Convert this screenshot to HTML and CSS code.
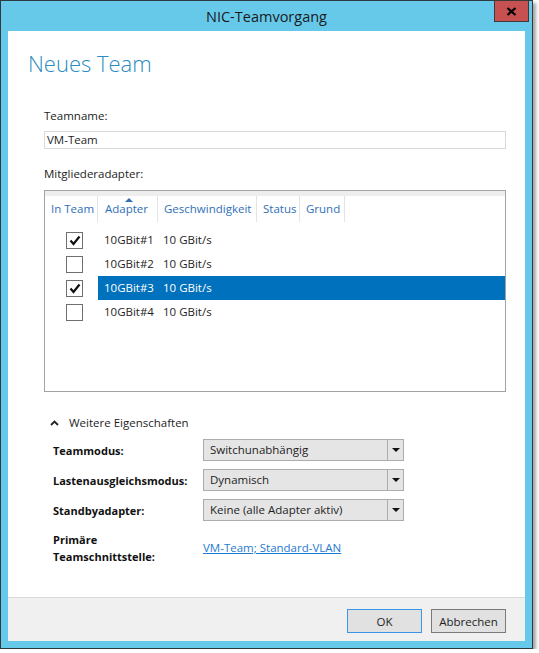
FILE: index.html
```html
<!DOCTYPE html>
<html lang="de">
<head>
<meta charset="utf-8">
<title>NIC-Teamvorgang</title>
<link rel="stylesheet" href="styles.css">
</head>
<body>
<div class="window">
  <div class="titlebar">
    <span class="title">NIC-Teamvorgang</span>
    <div class="close"><svg width="11" height="9" viewBox="0 0 11 9"><path d="M1.5 1 L9.5 8 M9.5 1 L1.5 8" stroke="#000" stroke-width="2.2" fill="none"/></svg></div>
  </div>
  <div class="content">
    <div class="main">
      <h1 class="heading">Neues Team</h1>
      <div class="label">Teamname:</div>
      <div class="textbox">VM-Team</div>
      <div class="label label-members">Mitgliederadapter:</div>
      <div class="listbox">
        <div class="list-band"></div>
        <div class="list-head">
          <div class="col c1">In Team</div>
          <div class="col c2 sorted">Adapter<span class="sort-arrow"></span></div>
          <div class="col c3">Geschwindigkeit</div>
          <div class="col c4">Status</div>
          <div class="col c5">Grund</div>
        </div>
        <div class="rows">
          <div class="row">
            <div class="cell c1"><span class="check on"><svg width="12" height="11" viewBox="0 0 12 11"><path d="M1.5 5.5 L4.5 9 L10.5 1.5" stroke="#111" stroke-width="2.2" fill="none"/></svg></span></div>
            <div class="cell c2">10GBit#1</div>
            <div class="cell c3">10 GBit/s</div>
          </div>
          <div class="row">
            <div class="cell c1"><span class="check"></span></div>
            <div class="cell c2">10GBit#2</div>
            <div class="cell c3">10 GBit/s</div>
          </div>
          <div class="row selected">
            <div class="cell c1"><span class="check on"><svg width="12" height="11" viewBox="0 0 12 11"><path d="M1.5 5.5 L4.5 9 L10.5 1.5" stroke="#111" stroke-width="2.2" fill="none"/></svg></span></div>
            <div class="sel">
              <div class="cell c2">10GBit#3</div>
              <div class="cell c3">10 GBit/s</div>
            </div>
          </div>
          <div class="row">
            <div class="cell c1"><span class="check"></span></div>
            <div class="cell c2">10GBit#4</div>
            <div class="cell c3">10 GBit/s</div>
          </div>
        </div>
      </div>
      <div class="more">
        <svg class="chev" width="9" height="6" viewBox="0 0 9 6"><path d="M1 5 L4.5 1.5 L8 5" stroke="#222" stroke-width="1.8" fill="none"/></svg>
        <span>Weitere Eigenschaften</span>
      </div>
      <div class="props">
        <div class="plabel">Teammodus:</div>
        <div class="combo"><span class="cval">Switchunabhängig</span><span class="carrow"></span></div>
        <div class="plabel">Lastenausgleichsmodus:</div>
        <div class="combo"><span class="cval">Dynamisch</span><span class="carrow"></span></div>
        <div class="plabel">Standbyadapter:</div>
        <div class="combo"><span class="cval">Keine (alle Adapter aktiv)</span><span class="carrow"></span></div>
        <div class="plabel two">Primäre<br>Teamschnittstelle:</div>
        <a class="link" href="#">VM-Team; Standard-VLAN</a>
      </div>
    </div>
    <div class="footer">
      <button class="btn default">OK</button>
      <button class="btn">Abbrechen</button>
    </div>
  </div>
</div>
</body>
</html>
```

FILE: styles.css
```css
* { box-sizing: border-box; }
html, body { margin: 0; padding: 0; background: #ffffff; }
body {
  font-family: "Open Sans", "Noto Sans", sans-serif;
  font-size: 11.5px;
  color: #1e1e1e;
}
.window {
  width: 533px;
  height: 649px;
  border: 1px solid #2e3a40;
  background: #66c9ea;
  display: flex;
  flex-direction: column;
  position: relative;
  box-shadow: 3px 3px 3px rgba(0,0,0,0.35);
}
.titlebar {
  height: 30px;
  flex: none;
  display: flex;
  align-items: center;
  justify-content: center;
}
.title {
  font-size: 14.5px;
  color: #1a1a1a;
  margin-top: 1px;
}
.close {
  position: absolute;
  top: -1px;
  right: 3px;
  width: 35px;
  height: 22px;
  background: #c75050;
  border: 1px solid #3a3a3a;
  display: flex;
  align-items: center;
  justify-content: center;
}
.content {
  flex: 1;
  margin: 0 7px 7px 7px;
  background: #ffffff;
  display: flex;
  flex-direction: column;
}
.main {
  flex: 1;
  padding: 0 19px 0 36px;
}
.heading {
  margin: 17px 0 0 -16px;
  font-weight: 300;
  font-size: 22px;
  line-height: 30px;
  color: #2a8bc0;
}
.label {
  margin-top: 30px;
  line-height: 16px;
  color: #222;
}
.textbox {
  margin-top: 7px;
  height: 18px;
  border: 1px solid #dadada;
  padding: 0 2px;
  line-height: 16px;
  color: #1e1e1e;
}
.label-members { margin-top: 17px; }
.listbox {
  margin-top: 8px;
  height: 202px;
  border: 1px solid #a3a3a3;
}
.list-band {
  height: 5px;
  background: #eeeeee;
}
.list-head {
  display: flex;
  height: 26px;
}
.col, .cell { flex: none; }
.c1 { width: 53px; }
.c2 { width: 60px; }
.c3 { width: 99px; }
.c4 { width: 43px; }
.c5 { width: 45px; }
.col {
  color: #2f6fba;
  padding-left: 6px;
  line-height: 26px;
  border-right: 1px solid #e4e4e4;
  white-space: nowrap;
  position: relative;
}
.sorted { padding-left: 7px; }
.sort-arrow {
  position: absolute;
  left: 27px;
  top: 2px;
  width: 0;
  height: 0;
  border-left: 4px solid transparent;
  border-right: 4px solid transparent;
  border-bottom: 4px solid #2f6fba;
}
.rows { margin-top: 6px; }
.row {
  display: flex;
  height: 24px;
  align-items: center;
}
.cell {
  line-height: 24px;
  white-space: nowrap;
}
.row .c2 { padding-left: 6px; }
.row .c3 { padding-left: 5px; }
.row .c1 {
  display: flex;
  align-items: center;
  padding-left: 21px;
}
.check {
  width: 17px;
  height: 17px;
  border: 1px solid #6f6f6f;
  background: #fff;
  display: flex;
  align-items: center;
  justify-content: center;
}
.sel {
  flex: 1;
  display: flex;
  height: 24px;
  background: #0071bc;
  color: #ffffff;
}
.more {
  margin-top: 23px;
  display: flex;
  align-items: center;
  padding-left: 6px;
  line-height: 16px;
}
.chev { margin-right: 10px; }
.props {
  margin-top: 8px;
  padding-left: 9px;
  display: grid;
  grid-template-columns: 150px 201px;
  row-gap: 8px;
  align-items: center;
}
.plabel {
  font-weight: 700;
  font-size: 11px;
  color: #111;
  line-height: 17px;
}
.plabel.two { margin-top: 2px; }
.combo {
  height: 22px;
  background: #e5e5e5;
  border: 1px solid #acacac;
  display: flex;
  align-items: stretch;
}
.cval {
  flex: 1;
  padding-left: 6px;
  line-height: 20px;
  color: #1e1e1e;
}
.carrow {
  width: 16px;
  border-left: 1px solid #acacac;
  position: relative;
}
.carrow::after {
  content: "";
  position: absolute;
  left: 4px;
  top: 8px;
  border-left: 4px solid transparent;
  border-right: 4px solid transparent;
  border-top: 4px solid #111;
}
.link {
  color: #1f7bd1;
  text-decoration: underline;
}
.footer {
  height: 44px;
  flex: none;
  background: #f0f0f0;
  border-top: 1px solid #dadada;
  display: flex;
  justify-content: flex-end;
  align-items: flex-start;
  padding: 11px 19px 0 0;
  gap: 9px;
}
.btn {
  width: 75px;
  height: 24px;
  background: #e1e1e1;
  border: 1px solid #7a7a7a;
  font-family: "Open Sans", "Noto Sans", sans-serif;
  font-size: 11.5px;
  color: #1e1e1e;
  padding: 0;
}
.btn.default { border-color: #3b97e6; }
```
